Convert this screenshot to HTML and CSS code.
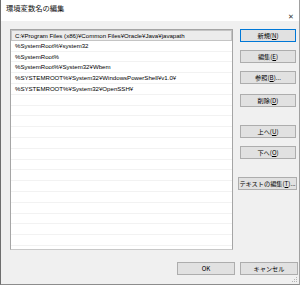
FILE: index.html
```html
<!DOCTYPE html>
<html lang="ja">
<head>
    <meta charset="UTF-8">
    <title>環境変数名の編集</title>
    <link rel="stylesheet" href="styles.css">
</head>
<body>
    <div class="window">
        <div class="titlebar">
            <span class="title">環境変数名の編集</span>
            <span class="close">&#x2715;</span>
        </div>

        <div class="main">
            <div class="list">
                <div class="row selected">C:¥Program Files (x86)¥Common Files¥Oracle¥Java¥javapath</div>
                <div class="row">%SystemRoot%¥system32</div>
                <div class="row">%SystemRoot%</div>
                <div class="row">%SystemRoot%¥System32¥Wbem</div>
                <div class="row">%SYSTEMROOT%¥System32¥WindowsPowerShell¥v1.0¥</div>
                <div class="row">%SYSTEMROOT%¥System32¥OpenSSH¥</div>
                <div class="row"></div>
                <div class="row"></div>
                <div class="row"></div>
                <div class="row"></div>
                <div class="row"></div>
                <div class="row"></div>
                <div class="row"></div>
                <div class="row"></div>
                <div class="row"></div>
                <div class="row"></div>
                <div class="row"></div>
                <div class="row"></div>
                <div class="row"></div>
                <div class="row"></div>
            </div>

            <div class="side">
                <button class="btn default">新規(<u>N</u>)</button>
                <button class="btn gap-s">編集(<u>E</u>)</button>
                <button class="btn gap-s">参照(<u>B</u>)...</button>
                <button class="btn gap-m">削除(<u>D</u>)</button>
                <button class="btn gap-l">上へ(<u>U</u>)</button>
                <button class="btn gap-s">下へ(<u>O</u>)</button>
                <button class="btn wide gap-l">テキストの編集(<u>T</u>)...</button>
            </div>
        </div>

        <div class="footer">
            <button class="btn foot">OK</button>
            <button class="btn foot">キャンセル</button>
        </div>

        <svg class="grip" width="6" height="6" viewBox="0 0 6 6">
            <rect x="4" y="0" width="1" height="1" fill="#b4b4b4"/>
            <rect x="2" y="2" width="1" height="1" fill="#b4b4b4"/>
            <rect x="4" y="2" width="1" height="1" fill="#b4b4b4"/>
            <rect x="0" y="4" width="1" height="1" fill="#b4b4b4"/>
            <rect x="2" y="4" width="1" height="1" fill="#b4b4b4"/>
            <rect x="4" y="4" width="1" height="1" fill="#b4b4b4"/>
        </svg>
    </div>
</body>
</html>
```

FILE: styles.css
```css
body {
    margin: 0;
    padding: 0;
    background: #fff;
    font-family: "Liberation Sans", "Noto Sans CJK JP", sans-serif;
    font-size: 6.1px;
    color: #000;
}
.window {
    position: relative;
    width: 300px;
    height: 285px;
    box-sizing: border-box;
    background: #f0f0f0;
    border-left: 1px solid #6e6e6e;
    border-right: 1px solid #a0a0a0;
    border-bottom: 1px solid #8c8c8c;
}
.titlebar {
    height: 21px;
    background: #fff;
    display: flex;
    justify-content: space-between;
    align-items: flex-start;
}
.title {
    font-family: "Noto Sans CJK JP", sans-serif;
    font-size: 7.3px;
    margin: 3px 0 0 5px;
    color: #111;
}
.close {
    font-size: 7px;
    margin: 13px 5px 0 0;
    color: #333;
}
.main {
    display: flex;
    gap: 6px;
    padding: 8px 0 0 9px;
}
.list {
    width: 223px;
    height: 221px;
    box-sizing: border-box;
    background: #fff;
    border: 1px solid #a5a5a5;
    border-bottom-color: #c8c8c8;
    overflow: hidden;
}
.row {
    height: 10.8px;
    box-sizing: border-box;
    padding: 0 0 0 4px;
    line-height: 10px;
    border-bottom: 1px solid #f2f2f2;
    white-space: nowrap;
}
.row.selected {
    background: #ececec;
    border: 1px solid #c4c4c4;
    padding-left: 3px;
    line-height: 9px;
}
.side {
    display: flex;
    flex-direction: column;
    width: 58px;
}
.btn {
    font-family: "Noto Sans CJK JP", "Noto Sans", sans-serif;
    font-size: 6.2px;
    height: 13px;
    width: 56px;
    margin-left: 1px;
    padding: 0;
    background: #e1e1e1;
    border: 1px solid #adadad;
    color: #000;
    line-height: 11px;
}
.btn u {
    text-decoration-thickness: 0.5px;
}
.btn.default {
    border-color: #0078d7;
}
.btn.wide {
    width: 59px;
    margin-left: -1px;
}
.gap-s {
    margin-top: 8px;
}
.gap-m {
    margin-top: 10px;
}
.gap-l {
    margin-top: 18px;
}
.footer {
    display: flex;
    justify-content: flex-end;
    gap: 5px;
    padding: 12px 1px 0 0;
}
.btn.foot {
    width: 58px;
    margin-left: 0;
}
.grip {
    position: absolute;
    right: 1px;
    bottom: 1px;
}
```
